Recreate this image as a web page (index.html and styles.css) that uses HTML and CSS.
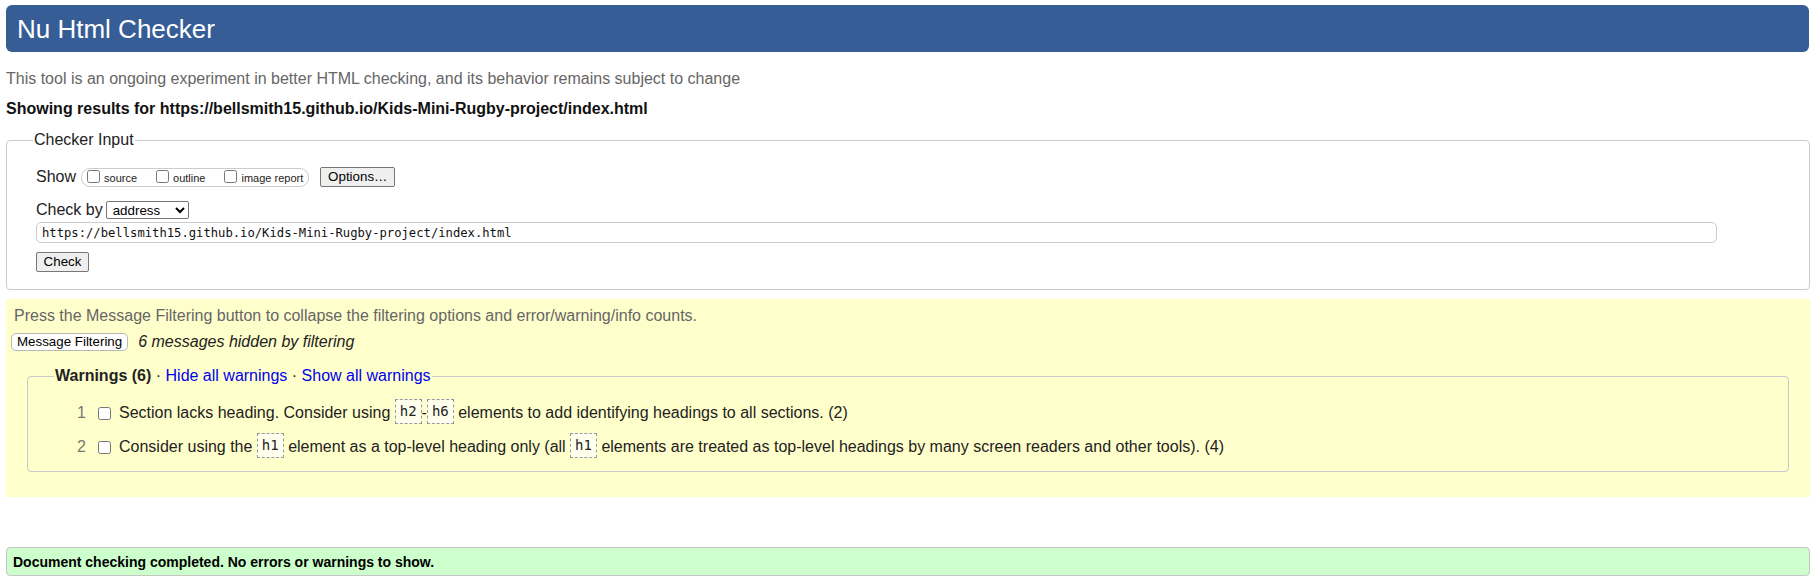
FILE: index.html
```html
<!DOCTYPE html>
<html lang="en">
<head>
<meta charset="utf-8">
<title>Nu Html Checker</title>
<link rel="stylesheet" href="styles.css">
</head>
<body>
<h1 class="title">Nu Html Checker</h1>
<p class="intro">This tool is an ongoing experiment in better HTML checking, and its behavior remains subject to change</p>
<p class="showing">Showing results for https://bellsmith15.github.io/Kids-Mini-Rugby-project/index.html</p>

<fieldset class="input-box">
  <legend class="input-legend">Checker Input</legend>
  <div class="input-body">
    <div class="show-row">
      <span class="show-label">Show</span>
      <span class="pill">
        <label class="opt"><input type="checkbox" class="cb">source</label>
        <label class="opt"><input type="checkbox" class="cb">outline</label>
        <label class="opt last"><input type="checkbox" class="cb">image report</label>
      </span>
      <button class="btn options-btn" type="button">Options…</button>
    </div>
    <div class="by-row">
      <span class="by-label">Check by</span>
      <select class="by-select"><option>address</option><option>file upload</option><option>text input</option></select>
    </div>
    <input class="url" type="text" value="https://bellsmith15.github.io/Kids-Mini-Rugby-project/index.html">
    <div class="check-row"><button class="btn check-btn" type="button">Check</button></div>
  </div>
</fieldset>

<div class="filters">
  <p class="press">Press the Message Filtering button to collapse the filtering options and error/warning/info counts.</p>
  <div class="filter-row">
    <button class="filter-btn" type="button">Message Filtering</button>
    <span class="hidden-note">6 messages hidden by filtering</span>
  </div>
  <fieldset class="warn-box">
    <legend class="warn-legend"><b>Warnings (6)</b> · <a href="#" class="lnk">Hide all warnings</a> · <a href="#" class="lnk">Show all warnings</a></legend>
    <ol class="warn-list">
      <li class="warn-item"><span class="num">1</span><input type="checkbox" class="cb wcb"><span class="msg">Section lacks heading. Consider using <code class="code">h2</code>-<code class="code">h6</code> elements to add identifying headings to all sections. (2)</span></li>
      <li class="warn-item"><span class="num">2</span><input type="checkbox" class="cb wcb"><span class="msg">Consider using the <code class="code">h1</code> element as a top-level heading only (all <code class="code">h1</code> elements are treated as top-level headings by many screen readers and other tools). (4)</span></li>
    </ol>
  </fieldset>
</div>

<p class="done">Document checking completed. No errors or warnings to show.</p>
</body>
</html>
```
FILE: styles.css
```css
html, body {
  background: #ffffff;
}
body {
  margin: 0 7px 0 6px;
  font-family: "Liberation Sans", Arial, sans-serif;
  font-size: 16px;
  line-height: 18px;
  color: #000;
}
.title {
  margin: 5px 1px 0 0;
  height: 47px;
  box-sizing: border-box;
  display: flex;
  align-items: center;
  padding: 0 0 0 11px;
  background: #365d95;
  color: #fff;
  border-radius: 6px;
  font-size: 26px;
  font-weight: normal;
  line-height: 30px;
}
.intro {
  margin: 18px 0 0;
  color: #666;
}
.showing {
  margin: 12px 0 0;
  font-weight: bold;
  color: #111;
}
.input-box {
  margin: 13px 0 0;
  padding: 0 0 17px;
  border: 1px solid #cccccc;
  border-radius: 4px;
  min-inline-size: 0;
}
.input-legend {
  margin-left: 26px;
  padding: 0 1px;
  color: #222;
}
.input-body {
  padding-left: 29px;
}
.show-row {
  display: flex;
  align-items: center;
  margin-top: 18px;
  height: 20px;
}
.show-label {
  margin-right: 5px;
  color: #222;
}
.pill {
  display: inline-flex;
  align-items: center;
  height: 19px;
  box-sizing: border-box;
  border: 1px solid #cccccc;
  border-radius: 9px;
  padding: 0 5px;
  margin-right: 11px;
}
.opt {
  display: inline-flex;
  align-items: center;
  font-size: 11px;
  line-height: 13px;
  margin-right: 19px;
  color: #222;
  padding-top: 2px;
}
.opt.last {
  margin-right: 0;
}
.cb {
  width: 13px;
  height: 13px;
  margin: 0 4px 0 0;
}
.opt .cb {
  margin-top: -3px;
}
.btn {
  font-family: "Liberation Sans", Arial, sans-serif;
  font-size: 13.33px;
  height: 20px;
  padding: 0 6px;
  border: 1px solid #767676;
  border-radius: 2px;
  background: #efefef;
  color: #000;
  line-height: 16px;
  white-space: nowrap;
}
.options-btn {
  width: 75px;
}
.by-row {
  display: flex;
  align-items: center;
  margin-top: 14px;
  height: 18px;
}
.by-label {
  margin-right: 3px;
  color: #222;
}
.by-select {
  width: 83px;
  height: 18px;
  font-family: "Liberation Sans", Arial, sans-serif;
  font-size: 13.33px;
  border: 1px solid #767676;
  border-radius: 2px;
  background: #fff;
  padding: 0 0 0 2px;
  color: #000;
}
.url {
  display: block;
  box-sizing: border-box;
  width: 1681px;
  height: 21px;
  margin: 3px 0 0;
  padding: 0 5px;
  border: 1px solid #cccccc;
  border-radius: 5px;
  font-family: "DejaVu Sans Mono", "Liberation Mono", monospace;
  font-size: 12.2px;
  color: #111;
  background: #fff;
}
.check-row {
  margin-top: 9px;
  height: 20px;
  display: flex;
}
.check-btn {
  width: 53px;
}
.filters {
  margin-top: 9px;
  background: #ffffcc;
  padding: 8px 8px 25px;
}
.press {
  margin: 0;
  color: #666;
}
.filter-row {
  display: flex;
  align-items: center;
  margin: 8px 0 0 -3px;
  height: 18px;
}
.filter-btn {
  height: 18px;
  min-width: 117px;
  padding: 0 5px;
  font-family: "Liberation Sans", Arial, sans-serif;
  font-size: 13.33px;
  line-height: 14px;
  white-space: nowrap;
  background: #fff;
  border: 1px solid #b8b8b8;
  border-radius: 5px;
  color: #000;
  margin-right: 10px;
}
.hidden-note {
  font-style: italic;
  color: #222;
}
.warn-box {
  margin: 16px 13px 0;
  padding: 0 0 7px;
  border: 1px solid #c8c8d0;
  border-radius: 4px;
  min-inline-size: 0;
}
.warn-legend {
  margin-left: 26px;
  padding: 0 1px;
  color: #222;
}
.lnk {
  color: #0000ee;
  text-decoration: none;
}
.warn-list {
  list-style: none;
  margin: 11px 0 0;
  padding: 0 0 0 38px;
}
.warn-item {
  display: flex;
  align-items: center;
  height: 34px;
  color: #222;
}
.num {
  width: 20px;
  text-align: right;
  color: #777;
}
.wcb {
  margin: 0 8px 0 12px;
}
.code {
  display: inline-block;
  font-family: "DejaVu Sans Mono", "Liberation Mono", monospace;
  font-size: 14px;
  line-height: 19px;
  padding: 2px 4px;
  border: 1px dashed #999;
  background: #ffffee;
  vertical-align: middle;
  margin-top: -4px;
  color: #222;
}
.done {
  margin: 50px 0 0;
  height: 29px;
  box-sizing: border-box;
  display: flex;
  align-items: center;
  padding-left: 6px;
  background: #ccffcc;
  border: 1px solid #c6c6c6;
  border-radius: 4px;
  font-size: 14px;
  font-weight: bold;
  color: #000;
}
```
